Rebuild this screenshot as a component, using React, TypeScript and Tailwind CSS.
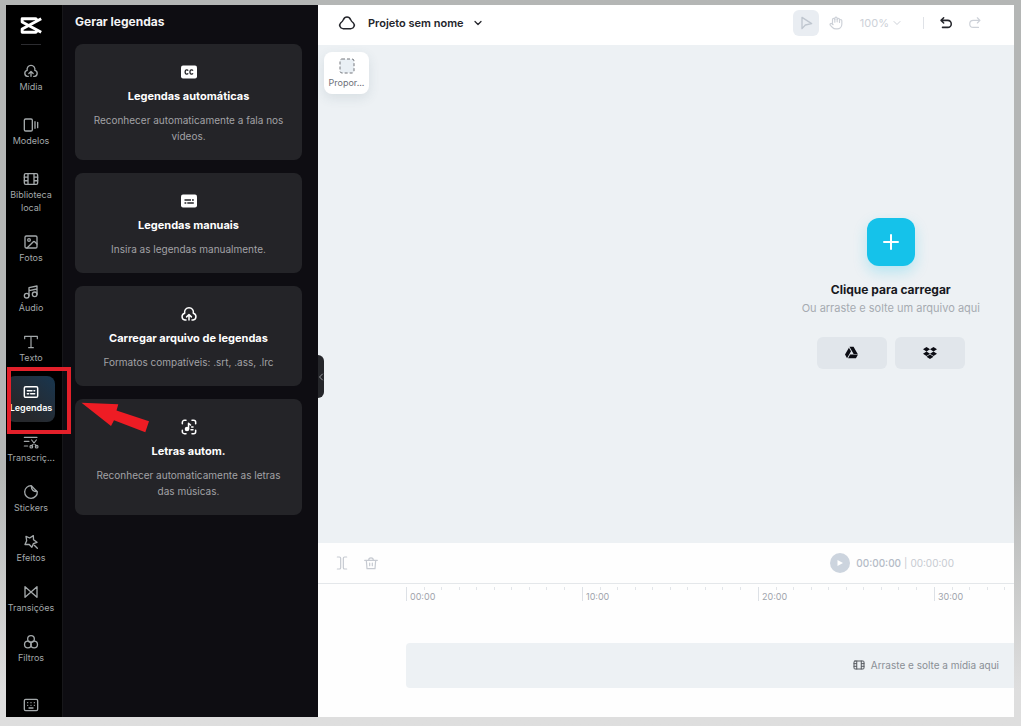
import type { ReactNode } from "react";
import { ChevronDown, ChevronLeft, Hand, Plus, Image } from "lucide-react";
import { FaDropbox, FaGoogleDrive } from "react-icons/fa";

type IconProps = { className?: string; width?: number; children?: ReactNode };

function Svg({ className = "size-4", width = 2, children }: IconProps) {
  return (
    <svg
      viewBox="0 0 24 24"
      className={className}
      fill="none"
      stroke="currentColor"
      strokeWidth={width}
      strokeLinecap="round"
      strokeLinejoin="round"
      aria-hidden="true"
    >
      {children}
    </svg>
  );
}

const CloudUpload = ({ className }: IconProps) => (
  <Svg className={className}>
    <path d="M8 20H6.5A4.6 4.6 0 0 1 6.3 11 5.9 5.9 0 1 1 17.7 11 4.6 4.6 0 0 1 17.5 20H16" />
    <path d="M12 20v-7M8.8 15.8 12 12.6l3.2 3.2" />
  </Svg>
);
const Templates = () => (
  <Svg>
    <rect x="2" y="3" width="12" height="18" rx="2" />
    <path d="M18 7v10M22 8v8" />
  </Svg>
);
const Film = ({ className }: IconProps) => (
  <Svg className={className}>
    <rect x="2" y="4" width="20" height="16" rx="2" />
    <path d="M7.5 4v16M16.5 4v16M2 9.3h5M2 14.6h5M17 9.3h5M17 14.6h5" />
  </Svg>
);
const Music = () => (
  <Svg>
    <circle cx="5.5" cy="17.5" r="3.5" />
    <circle cx="17.5" cy="15.5" r="3.5" />
    <path d="M9 17.5V5.5L21 3v12.5M9 10l12-2.5" />
  </Svg>
);
const TextIcon = () => (
  <Svg width={1.8}>
    <path d="M2.500 7V3.500h19V7M12 3.500v17M8.500 20.500h7" />
  </Svg>
);
const Captions = () => (
  <Svg width={2.2}>
    <rect x="2" y="4" width="20" height="16" rx="2" />
    <path d="M6.5 10h7M16.5 10h1M6.5 14.5h2M11.5 14.5h6" />
  </Svg>
);
const Transcript = () => (
  <Svg width={1.8}>
    <path d="M2 5h19M2 11h7M2 18h5M13 9l7 9M20 9l-7 9" />
    <circle cx="12.5" cy="19" r="2" />
    <circle cx="20.5" cy="19" r="2" />
  </Svg>
);
const Sticker = () => (
  <Svg>
    <path d="M12.500 2.500A9.500 9.500 0 1 0 21.500 11.500C18 8.500 15.500 6 12.500 2.500ZM12.500 2.500c0 6 3 9 9 9" />
  </Svg>
);
const Effects = () => (
  <Svg>
    <path d="M4.500 3.500 10 6l5.500-3.500.3 6 5.200 4-5.500 2-2.200 5.500-4.300-4.500-6 .3L5.500 10ZM17 17l4.500 4.500" />
  </Svg>
);
const Transitions = () => (
  <Svg>
    <path d="M3 4v16L12 12ZM21 4v16L12 12Z" />
  </Svg>
);
const Filters = () => (
  <Svg>
    <circle cx="12" cy="7.5" r="5" />
    <circle cx="7.3" cy="15.8" r="5" />
    <circle cx="16.7" cy="15.8" r="5" />
  </Svg>
);
const Keyboard = () => (
  <Svg>
    <rect x="2" y="3.5" width="20" height="17" rx="2" />
    <path d="M7 8.500h.01M12 8.500h.01M17 8.500h.01M7 12.500h.01M12 12.500h.01M17 12.500h.01M9 16.500h6" />
  </Svg>
);
const CcBadge = () => (
  <svg viewBox="0 0 16 16" className="size-4" fill="none" aria-hidden="true">
    <rect y="1.5" width="16" height="13" rx="2" fill="#fff" />
    <path
      d="M7.200 6.600A1.700 1.700 0 0 0 4.200 7.200v1.600a1.700 1.700 0 0 0 3 .6M12 6.600A1.700 1.700 0 0 0 9 7.200v1.600a1.700 1.700 0 0 0 3 .6"
      stroke="#242428"
      strokeWidth="1.3"
    />
  </svg>
);
const ManualBadge = () => (
  <svg viewBox="0 0 16 16" className="size-4" fill="none" aria-hidden="true">
    <rect y="1.5" width="16" height="13" rx="2" fill="#fff" />
    <path d="M3.500 7h6.500M11 7h1.800M3.500 10h1.800M6.300 10h6.500" stroke="#242428" strokeWidth="1.400" />
  </svg>
);
const Lyrics = () => (
  <Svg width={2.3}>
    <path d="M2 7V5a3 3 0 0 1 3-3h2.500M16.500 2H19a3 3 0 0 1 3 3v2M22 17v2a3 3 0 0 1-3 3h-2.500M7.500 22H5a3 3 0 0 1-3-3v-2" />
    <circle cx="9" cy="15" r="2.3" fill="currentColor" />
    <path d="M11.300 15V6.500l3 2.500M16 12h2M15 16h3" />
  </Svg>
);

type NavItem = { label: string; icon: ReactNode; active?: boolean; spaced?: boolean };

const navItems: NavItem[] = [
  { label: "Mídia", icon: <CloudUpload />, spaced: true },
  { label: "Modelos", icon: <Templates />, spaced: true },
  { label: "Biblioteca local", icon: <Film /> },
  { label: "Fotos", icon: <Image className="size-4" /> },
  { label: "Áudio", icon: <Music /> },
  { label: "Texto", icon: <TextIcon /> },
  { label: "Legendas", icon: <Captions />, active: true },
  { label: "Transcriç...", icon: <Transcript /> },
  { label: "Stickers", icon: <Sticker /> },
  { label: "Efeitos", icon: <Effects /> },
  { label: "Transições", icon: <Transitions /> },
  { label: "Filtros", icon: <Filters /> },
];

const cards = [
  { title: "Legendas automáticas", text: "Reconhecer automaticamente a fala nos vídeos.", icon: <CcBadge /> },
  { title: "Legendas manuais", text: "Insira as legendas manualmente.", icon: <ManualBadge /> },
  { title: "Carregar arquivo de legendas", text: "Formatos compatíveis: .srt, .ass, .lrc", icon: <CloudUpload className="-my-px size-[18px]" /> },
  { title: "Letras autom.", text: "Reconhecer automaticamente as letras das músicas.", icon: <Lyrics /> },
];

function Highlight() {
  return (
    <>
      <span className="pointer-events-none absolute -top-[9px] left-0 h-[67px] w-16 border-4 border-[#e3202a]" />
      <svg
        viewBox="0 0 70 32"
        className="pointer-events-none absolute top-[26px] left-[74px] h-8 w-[70px]"
        fill="#ee1c24"
        aria-hidden="true"
      >
        <path d="M0.500 0.700 37.300 2.300 35.500 8.500 68 19.300 64.300 30.300 33 18.300 30 24Z" />
      </svg>
    </>
  );
}

function Sidebar() {
  return (
    <nav className="relative z-10 flex w-[57px] shrink-0 flex-col items-center border-r border-[#17171a] bg-black pr-[7px] pl-px">
      <a href="#inicio" aria-label="CapCut" className="mt-3 block">
        <svg viewBox="0 0 64 50" className="h-[17px] w-[22px]" fill="none" stroke="#fff" strokeWidth="8.5" strokeLinejoin="round">
          <path d="M62 5 6 35V45H45Q49 45 49 38" />
          <path d="M62 45 6 15V5H45Q49 5 49 12" />
        </svg>
      </a>
      <span className="mt-[10px] mb-[10px] h-px w-5 bg-[#2c2c30]" />
      <ul className="flex flex-col gap-1">
        {navItems.map((item) => (
          <li key={item.label} className={item.spaced ? "relative mb-1" : "relative"}>
            <button
              type="button"
              className={
                item.active
                  ? "flex w-12 flex-col items-center rounded-lg bg-linear-to-bl from-[#17364f] to-[#26282c] to-70% pt-2 pb-2 text-white"
                  : "flex w-12 flex-col items-center pt-2 pb-2 text-[#a3a8aa]"
              }
            >
              {item.icon}
              <span
                className={
                  item.active
                    ? "mt-px text-[9px] leading-[13px] font-semibold"
                    : "mt-px text-[9px] leading-[13px]"
                }
              >
                {item.label}
              </span>
            </button>
            {item.active && <Highlight />}
          </li>
        ))}
      </ul>
      <button type="button" aria-label="Atalhos do teclado" className="mt-auto mb-1 text-[#a3a8aa]">
        <Keyboard />
      </button>
    </nav>
  );
}

function CaptionPanel() {
  return (
    <section className="relative w-[255px] shrink-0 bg-[#0e0d12] pr-4 pl-3">
      <h1 className="pt-[9px] text-xs leading-4 font-bold text-[#f4f4f5]">Gerar legendas</h1>
      <div className="mt-[14px] flex flex-col gap-[13px]">
        {cards.map((card) => (
          <button
            key={card.title}
            type="button"
            className="flex flex-col items-center rounded-lg bg-[#242428] px-4 pt-5 pb-4 text-center text-white"
          >
            {card.icon}
            <span className="mt-2 text-[11px] leading-4 font-bold">{card.title}</span>
            <span className="mt-2 text-[10px] leading-4 text-[#a2a2a6]">{card.text}</span>
          </button>
        ))}
      </div>
      <button
        type="button"
        aria-label="Recolher painel"
        className="absolute top-[350px] left-full z-10 flex h-[43px] w-1.5 items-center justify-center rounded-r-md bg-[#25262a] text-[#96989c]"
      >
        <ChevronLeft className="size-3 shrink-0" />
      </button>
    </section>
  );
}

function Header() {
  return (
    <header className="flex h-10 items-center bg-white pr-8 pb-[5px] pl-5">
      <Svg className="size-[18px] text-[#24252b]">
        <path d="M6.500 19.500A4.500 4.500 0 0 1 3.500 12C6 10 6.500 9.500 7.200 7.500 9 3 15 3 16.800 7.500c.7 2 1.200 2.500 3.700 4.500A4.500 4.500 0 0 1 17.500 19.500Z" />
      </Svg>
      <button type="button" className="ml-3 flex items-center gap-2 text-[11px] leading-4 font-semibold text-[#24252b]">
        Projeto sem nome
        <ChevronDown className="size-3" strokeWidth={2.5} />
      </button>
      <div className="ml-auto flex items-center text-[#cdd1d8]">
        <button type="button" aria-label="Selecionar" className="flex size-[26px] items-center justify-center rounded-md bg-[#e9edf2] text-[#bfc6cf]">
          <Svg className="size-4" width={2}>
            <path d="M6 3.500v17l5-5.500 9.500-2Z" />
          </Svg>
        </button>
        <button type="button" aria-label="Mover" className="ml-[10px]">
          <Hand className="size-[14px]" />
        </button>
        <button type="button" className="ml-[17px] flex items-center gap-0.5 text-[11px] leading-4">
          100%
          <ChevronDown className="size-3" />
        </button>
        <span className="ml-5 h-3 w-px bg-[#dfe2e7]" />
        <button type="button" aria-label="Desfazer" className="ml-[15px] text-[#24252b]">
          <Svg className="size-[14px]" width={2.6}>
            <path d="M8 3 3.500 7.500 8 12M4 7.500h11a6 6 0 0 1 0 12H6" />
          </Svg>
        </button>
        <button type="button" aria-label="Refazer" className="ml-[15px]">
          <Svg className="size-[14px]">
            <path d="M16 3l4.500 4.500L16 12M20 7.500H9a6 6 0 0 0 0 12h9" />
          </Svg>
        </button>
      </div>
    </header>
  );
}

function Canvas() {
  return (
    <section className="relative flex flex-1 flex-col items-end justify-center bg-[#edf1f4] pr-[34px] pb-0.5">
      <button
        type="button"
        className="absolute top-[7px] left-1.5 flex w-[45px] flex-col items-center rounded-lg bg-white pt-1.5 pb-[5px] text-[#6d7078] shadow-[0_4px_12px_rgba(60,90,110,0.12)]"
      >
        <svg viewBox="0 0 16 16" className="size-4" aria-hidden="true">
          <rect x="1" y="1" width="14" height="14" rx="2" fill="#eaf0f5" stroke="#74777d" strokeDasharray="3 2" />
        </svg>
        <span className="mt-0.5 text-[9px] leading-[13px]">Propor...</span>
      </button>
      <div className="flex flex-col items-center">
        <button
          type="button"
          aria-label="Carregar"
          className="flex size-12 items-center justify-center rounded-xl bg-[#15c2ea] text-white shadow-[0_6px_14px_rgba(21,194,234,0.25)]"
        >
          <Plus className="size-6" strokeWidth={2} />
        </button>
        <h2 className="mt-4 text-xs leading-4 font-bold text-[#17181d]">Clique para carregar</h2>
        <p className="mt-0.5 text-[11px] leading-4 text-[#a6abb1]">Ou arraste e solte um arquivo aqui</p>
        <div className="mt-[21px] flex gap-2 text-[#0c0d14]">
          <button type="button" aria-label="Google Drive" className="flex h-8 w-[70px] items-center justify-center rounded-md bg-[#e1e6eb]">
            <FaGoogleDrive className="size-[13px]" />
          </button>
          <button type="button" aria-label="Dropbox" className="flex h-8 w-[70px] items-center justify-center rounded-md bg-[#e1e6eb]">
            <FaDropbox className="size-[14px]" />
          </button>
        </div>
      </div>
    </section>
  );
}

const marks = ["00:00", "10:00", "20:00", "30:00"];

function Timeline() {
  return (
    <section className="bg-[#fefefe]">
      <div className="flex h-[41px] items-center border-b border-[#e4e7ea] pr-[60px] pl-4 text-[#c6cad1]">
        <button type="button" aria-label="Dividir">
          <Svg className="size-4" width={1.8}>
            <path d="M5 3h3a2 2 0 0 1 2 2v14a2 2 0 0 1-2 2H5M19 3h-3a2 2 0 0 0-2 2v14a2 2 0 0 0 2 2h3" />
          </Svg>
        </button>
        <button type="button" aria-label="Excluir" className="ml-[13px]">
          <Svg className="size-4" width={1.8}>
            <path d="M2.500 8h19M5 8l1 12.500h12L19 8M8.500 8c0-5 7-5 7 0M10 12v4M14 12v4" />
          </Svg>
        </button>
        <button type="button" aria-label="Reproduzir" className="ml-auto flex size-5 items-center justify-center rounded-full bg-[#ccd4de] text-white">
          <svg viewBox="0 0 8 8" className="size-2" fill="currentColor" aria-hidden="true">
            <path d="M1.500 1v6L7 4Z" />
          </svg>
        </button>
        <p className="ml-1.5 flex gap-[3px] text-[10px] leading-4">
          <span className="font-medium text-[#b4bbc6]">00:00:00</span>
          <span>|</span>
          <span>00:00:00</span>
        </p>
      </div>
      <div className="pb-[29px] pl-[88px]">
        <ol className="flex h-[59px] overflow-hidden pt-[3px]">
          {marks.map((mark) => (
            <li key={mark} className="flex w-44 shrink-0 items-start">
              <span className="h-[14px] w-px bg-[#dde1e6]" />
              <div className="flex-1">
                <div className="grid h-[3px] grid-cols-10">
                  {Array.from({ length: 10 }, (_, i) => (
                    <span key={i} className={i < 9 ? "border-r border-[#e2e5e9]" : ""} />
                  ))}
                </div>
                <span className="block pt-px pl-[3px] text-[9px] leading-3 text-[#9ea4ac]">{mark}</span>
              </div>
            </li>
          ))}
        </ol>
        <div className="flex h-[45px] items-center justify-end gap-1.5 rounded-l bg-[#edf1f4] pr-[15px] pb-0.5 text-[10px] leading-4 text-[#8a8f95]">
          <Film className="size-3 text-[#54585e]" />
          Arraste e solte a mídia aqui
        </div>
      </div>
    </section>
  );
}

export default function App() {
  return (
    <div className="flex min-h-screen bg-linear-to-b from-[#b4b6b5] from-65% to-[#dedede] to-95% pt-[5px] pr-[7px] pb-[9px] pl-1.5 font-['Inter','Liberation_Sans',sans-serif]">
      <Sidebar />
      <CaptionPanel />
      <main className="flex min-w-0 flex-1 flex-col">
        <Header />
        <Canvas />
        <Timeline />
      </main>
    </div>
  );
}
